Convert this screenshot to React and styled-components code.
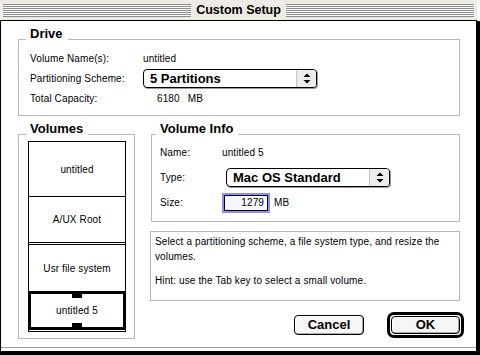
import styled, { createGlobalStyle } from "styled-components";

const GlobalStyle = createGlobalStyle`
  html, body {
    margin: 0;
    padding: 0;
    background: #fff;
  }
  body {
    font-family: "Liberation Sans", Arial, sans-serif;
    font-size: 10px;
    letter-spacing: 0.12px;
    color: #000;
  }
`;

const Window = styled.div`
  width: 480px;
  height: 355px;
  display: flex;
  flex-direction: column;
  background: #fff;
`;

const TitleBar = styled.div`
  width: 477px;
  height: 21px;
  box-sizing: border-box;
  display: flex;
  align-items: center;
  padding: 0 3px;
  background: #eeebe5;
  border-bottom: 1px solid #000;
`;

const Stripes = styled.div`
  flex: 1;
  height: 13px;
  margin-top: 1px;
  background: repeating-linear-gradient(
    to bottom,
    #8d8d8d 0 1px,
    #fbfaf8 1px 2px
  );
`;

const Title = styled.span`
  padding: 0 5px;
  letter-spacing: 0;
  font: bold 12.5px/20px "Liberation Sans", Arial, sans-serif;
`;

const Body = styled.div`
  flex: 1;
  display: flex;
  flex-direction: column;
  padding: 18px 16px 0 17px;
  border-left: 1px solid #000;
  border-right: 4px solid #000;
  border-bottom: 4px solid #000;
  box-shadow: inset 0 -3px 0 #fff, inset 0 -4px 0 #a0a0a0;
`;

const Group = styled.div`
  position: relative;
  box-sizing: border-box;
  border: 1px solid #b8b8b8;
`;

const Legend = styled.span`
  position: absolute;
  top: -13px;
  left: ${(p) => p.$inset}px;
  padding: 0 5px 0 4px;
  background: #fff;
  letter-spacing: 0;
  font: bold 13px/14px "Liberation Sans", Arial, sans-serif;
`;

const DriveGroup = styled(Group)`
  padding: 8px 0 7px 11px;
  margin-bottom: 18px;
`;

const Lower = styled.div`
  display: flex;
  gap: 16px;
`;

const VolumesGroup = styled(Group)`
  width: 117px;
  height: 205px;
  flex: none;
  padding: 6px 0 0 9px;
`;

const VolumeList = styled.div`
  width: 98px;
  box-sizing: border-box;
  border: 1px solid #000;
  padding-bottom: 1px;
  display: flex;
  flex-direction: column;
`;

const Cell = styled.div`
  position: relative;
  height: ${(p) => p.$h}px;
  box-sizing: border-box;
  display: flex;
  align-items: center;
  justify-content: center;
  border-bottom: ${(p) =>
    p.$edge === "double"
      ? "3px double #000"
      : p.$edge === "none"
      ? "none"
      : "1px solid #000"};
  ${(p) =>
    p.$selected &&
    `
    margin: 0 -1px;
    border: 3px solid #000;
  `}
`;

const Handle = styled.span`
  position: absolute;
  left: 50%;
  width: 10px;
  height: 5px;
  margin-left: -5px;
  background: #000;
  ${(p) => (p.$bottom ? "bottom: -1px;" : "top: -1px;")}
`;

const RightColumn = styled.div`
  width: 309px;
  display: flex;
  flex-direction: column;
`;

const InfoGroup = styled(Group)`
  padding: 5px 0 6px 8px;
  margin-bottom: 9px;
`;

const FormRow = styled.div`
  display: flex;
  align-items: center;
  height: ${(p) => p.$h}px;
`;

const Label = styled.span`
  width: ${(p) => p.$w}px;
  flex: none;
`;

const Value = styled.span`
  padding-left: ${(p) => p.$indent || 0}px;
`;

const Unit = styled.span`
  margin-left: ${(p) => p.$gap}px;
`;

const Popup = styled.div`
  width: ${(p) => p.$w}px;
  height: 19px;
  margin-left: ${(p) => p.$offset || 0}px;
  box-sizing: border-box;
  display: flex;
  border: 1px solid #000;
  border-radius: 4px;
  box-shadow: 1px 1px 0 #9a9a9a;
  background: #fff;
  overflow: hidden;
`;

const PopupLabel = styled.span`
  flex: 1;
  padding-left: 6px;
  letter-spacing: 0;
  font: bold 13px/17px "Liberation Sans", Arial, sans-serif;
  white-space: nowrap;
`;

const PopupArrows = styled.span`
  width: 19px;
  display: flex;
  align-items: center;
  justify-content: center;
  border-left: 1px solid #c4c4c4;
  background: #ececec;
`;

const SizeField = styled.input`
  width: 44px;
  height: 16px;
  margin-left: 2px;
  box-sizing: border-box;
  padding: 0 3px 0 0;
  border: 1px solid #000;
  box-shadow: 0 0 0 2px #8e8ef0;
  background: #f7f5ff;
  text-align: right;
  font: 10px/14px "Liberation Sans", Arial, sans-serif;
  letter-spacing: 0.12px;
  color: #000;
  outline: none;
`;

const Description = styled.div`
  height: 70px;
  margin-left: -1px;
  box-sizing: border-box;
  border: 1px solid #b8b8b8;
  padding: 2px 4px;
  line-height: 15px;
  p {
    margin: 0;
  }
  p + p {
    margin-top: 9px;
  }
`;

const ButtonRow = styled.div`
  display: flex;
  justify-content: flex-end;
  align-items: center;
  gap: 23px;
  margin-top: 11px;
  margin-right: -4px;
`;

const Button = styled.button`
  width: ${(p) => p.$w}px;
  height: ${(p) => p.$h}px;
  padding: 0;
  border: 1px solid #000;
  border-radius: 4px;
  background: #f6f6f6;
  box-shadow: inset -1px -1px 0 #a8a8a8, inset 1px 1px 0 #fff;
  font: bold 13px/16px "Liberation Sans", Arial, sans-serif;
  color: #000;
`;

const DefaultRing = styled.div`
  padding: 1px;
  border: 3px solid #000;
  border-radius: 7px;
  display: flex;
`;

const Arrows = () => (
  <svg width="8" height="11" viewBox="0 0 8 11">
    <path d="M4 0.5L7.5 4H0.5Z M0.5 7H7.5L4 10.5Z" fill="#000" />
  </svg>
);

const volumes = [
  { name: "untitled", h: 55, edge: "single" },
  { name: "A/UX Root", h: 48, edge: "double" },
  { name: "Usr file system", h: 46, edge: "none" },
  { name: "untitled 5", h: 39, selected: true },
];

export default function App() {
  return (
    <>
      <GlobalStyle />
      <Window>
        <TitleBar>
          <Stripes />
          <Title>Custom Setup</Title>
          <Stripes />
        </TitleBar>
        <Body>
          <DriveGroup>
            <Legend $inset={7}>Drive</Legend>
            <FormRow $h={20}>
              <Label $w={113}>Volume Name(s):</Label>
              <Value>untitled</Value>
            </FormRow>
            <FormRow $h={20}>
              <Label $w={113}>Partitioning Scheme:</Label>
              <Popup $w={174}>
                <PopupLabel>5 Partitions</PopupLabel>
                <PopupArrows>
                  <Arrows />
                </PopupArrows>
              </Popup>
            </FormRow>
            <FormRow $h={20}>
              <Label $w={113}>Total Capacity:</Label>
              <Value $indent={14}>6180</Value>
              <Unit $gap={8}>MB</Unit>
            </FormRow>
          </DriveGroup>

          <Lower>
            <VolumesGroup>
              <Legend $inset={7}>Volumes</Legend>
              <VolumeList>
                {volumes.map((v) => (
                  <Cell key={v.name} $h={v.h} $edge={v.edge} $selected={v.selected}>
                    {v.selected && <Handle />}
                    {v.name}
                    {v.selected && <Handle $bottom />}
                  </Cell>
                ))}
              </VolumeList>
            </VolumesGroup>

            <RightColumn>
              <InfoGroup>
                <Legend $inset={4}>Volume Info</Legend>
                <FormRow $h={25}>
                  <Label $w={62}>Name:</Label>
                  <Value>untitled 5</Value>
                </FormRow>
                <FormRow $h={25}>
                  <Label $w={62}>Type:</Label>
                  <Popup $w={164} $offset={4}>
                    <PopupLabel>Mac OS Standard</PopupLabel>
                    <PopupArrows>
                      <Arrows />
                    </PopupArrows>
                  </Popup>
                </FormRow>
                <FormRow $h={25}>
                  <Label $w={62}>Size:</Label>
                  <SizeField readOnly defaultValue="1279" />
                  <Unit $gap={6}>MB</Unit>
                </FormRow>
              </InfoGroup>

              <Description>
                <p>
                  Select a partitioning scheme, a file system type, and resize the
                  volumes.
                </p>
                <p>Hint: use the Tab key to select a small volume.</p>
              </Description>

              <ButtonRow>
                <Button $w={70} $h={20}>Cancel</Button>
                <DefaultRing>
                  <Button $w={69} $h={18}>OK</Button>
                </DefaultRing>
              </ButtonRow>
            </RightColumn>
          </Lower>
        </Body>
      </Window>
    </>
  );
}
